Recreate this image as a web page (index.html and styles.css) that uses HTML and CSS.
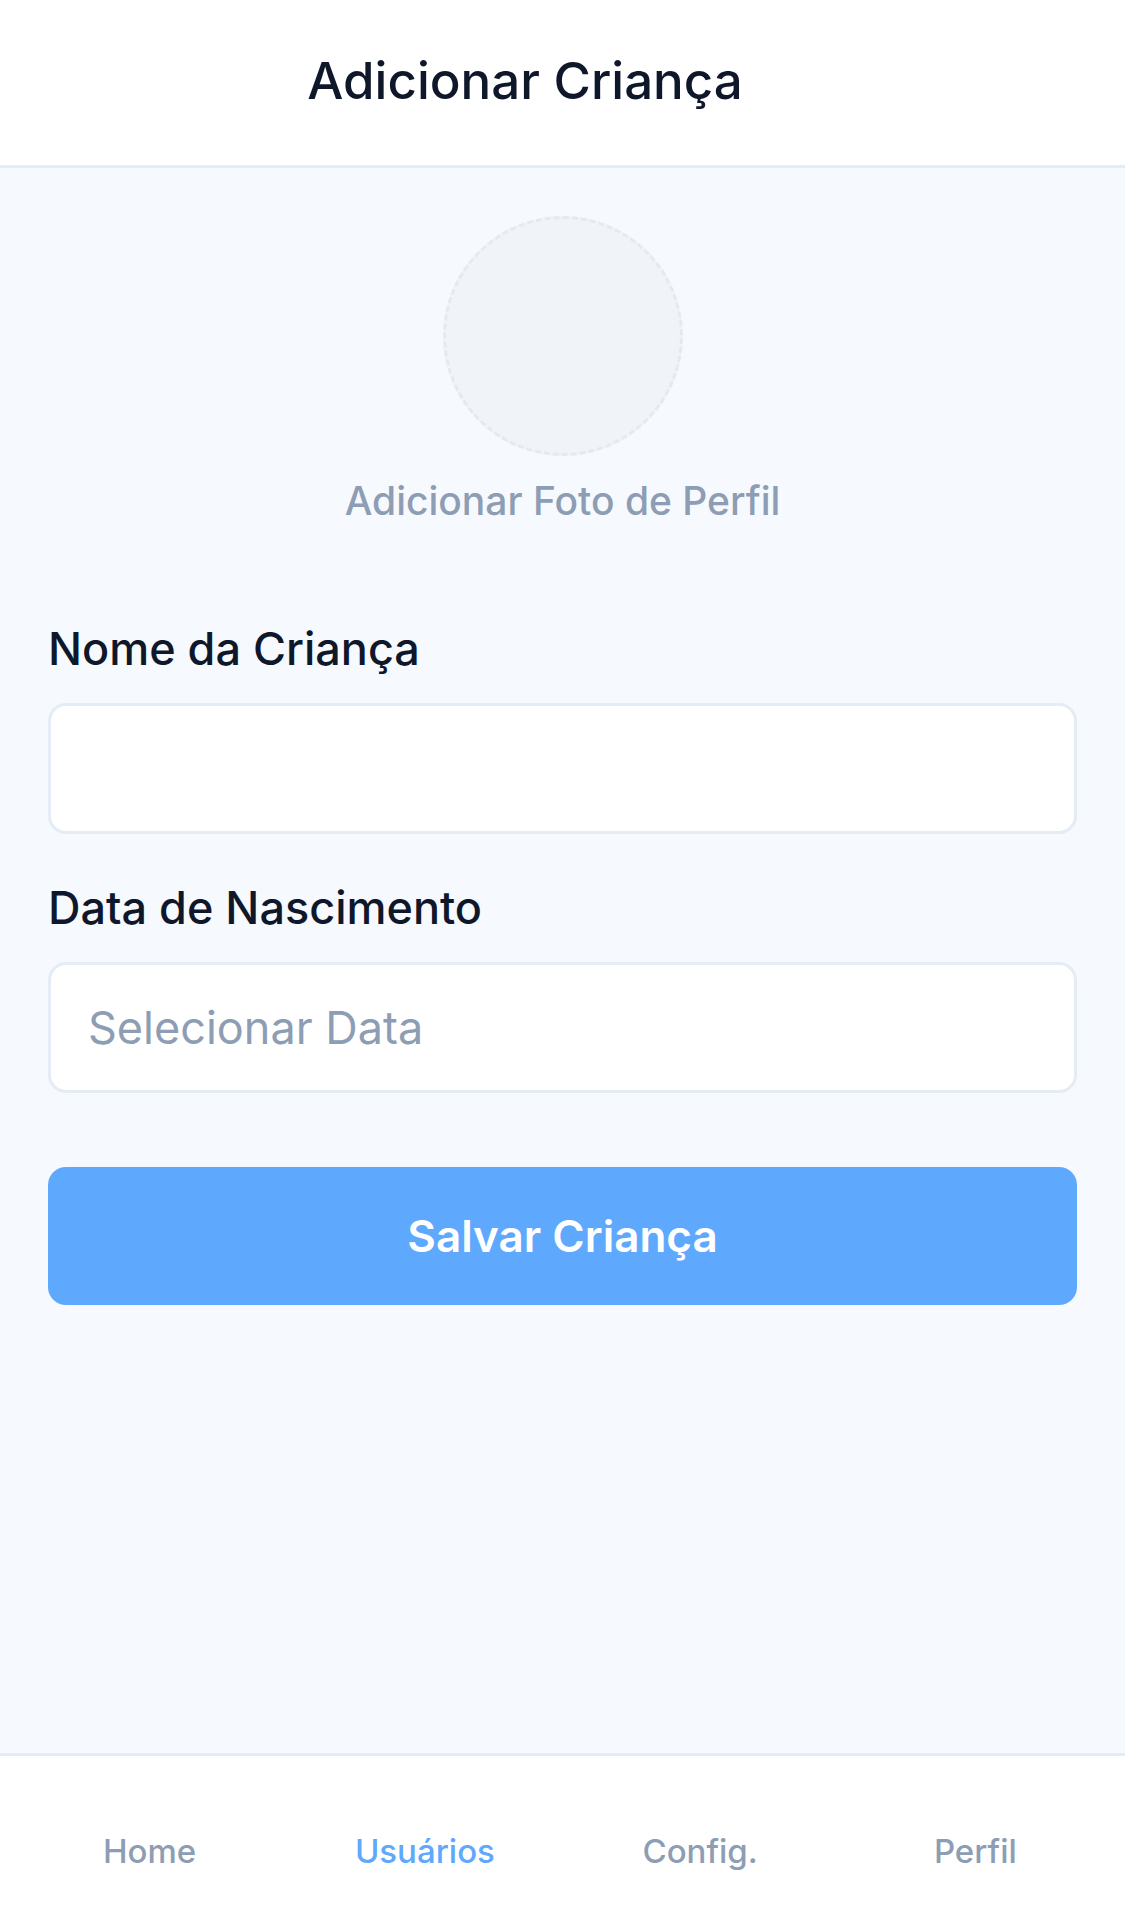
FILE: index.html
```html
<!DOCTYPE html>
<html lang="pt">
<head>
<meta charset="utf-8">
<title>Adicionar Criança</title>
<link rel="stylesheet" href="styles.css">
</head>
<body>
<div class="app">
  <header class="topbar">
    <h1 class="title">Adicionar Criança</h1>
  </header>
  <main class="content">
    <div class="photo">
      <div class="avatar"></div>
      <div class="photo-label">Adicionar Foto de Perfil</div>
    </div>
    <form class="form">
      <label class="label">Nome da Criança</label>
      <div class="input"></div>
      <label class="label label-second">Data de Nascimento</label>
      <div class="input"><span class="placeholder">Selecionar Data</span></div>
      <button type="button" class="save">Salvar Criança</button>
    </form>
  </main>
  <nav class="tabbar">
    <div class="tab">Home</div>
    <div class="tab active">Usuários</div>
    <div class="tab">Config.</div>
    <div class="tab">Perfil</div>
  </nav>
</div>
</body>
</html>
```
FILE: styles.css
```css
* { box-sizing: border-box; }
html, body { margin: 0; padding: 0; }
body {
  font-family: Inter, "Noto Sans", sans-serif;
  background: #f6f9fe;
  color: #0f172a;
}
.app {
  height: 1932px;
  display: flex;
  flex-direction: column;
}
.topbar {
  height: 168px;
  background: #ffffff;
  border-bottom: 3px solid #e4ecf5;
  display: flex;
  justify-content: center;
  padding: 51px 75px 0 0;
}
.title {
  margin: 0;
  font-size: 51px;
  line-height: 60px;
  font-weight: 500;
  color: #0f172a;
}
.content {
  flex: 1;
  padding: 48px 48px 0;
}
.photo {
  display: flex;
  flex-direction: column;
  align-items: center;
}
.avatar {
  width: 240px;
  height: 240px;
  border-radius: 50%;
  background: #f0f4f9;
  border: 3px dashed #e3eaf3;
}
.photo-label {
  margin-top: 21px;
  font-size: 39px;
  line-height: 48px;
  font-weight: 500;
  color: #8d9db4;
}
.form {
  display: flex;
  flex-direction: column;
  margin-top: 97px;
}
.label {
  font-size: 45px;
  line-height: 54px;
  font-weight: 500;
  color: #0f172a;
}
.label-second { margin-top: 47px; }
.input {
  margin-top: 27px;
  height: 131px;
  background: #ffffff;
  border: 3px solid #e4ecf5;
  border-radius: 18px;
  display: flex;
  align-items: center;
  padding: 0 37px;
}
.placeholder {
  font-size: 45px;
  line-height: 54px;
  color: #8d9db4;
}
.save {
  margin-top: 74px;
  height: 138px;
  border: none;
  border-radius: 18px;
  background: #5ea8fd;
  color: #ffffff;
  font-family: Inter, "Noto Sans", sans-serif;
  font-size: 44px;
  font-weight: 600;
  padding: 0;
}
.tabbar {
  height: 179px;
  background: #ffffff;
  border-top: 3px solid #e4ecf5;
  display: grid;
  grid-template-columns: repeat(4, 1fr);
  padding: 75px 12px 0;
}
.tab {
  text-align: center;
  font-size: 33px;
  line-height: 40px;
  font-weight: 500;
  color: #8d9db4;
}
.tab.active { color: #5ea8fd; }
```
